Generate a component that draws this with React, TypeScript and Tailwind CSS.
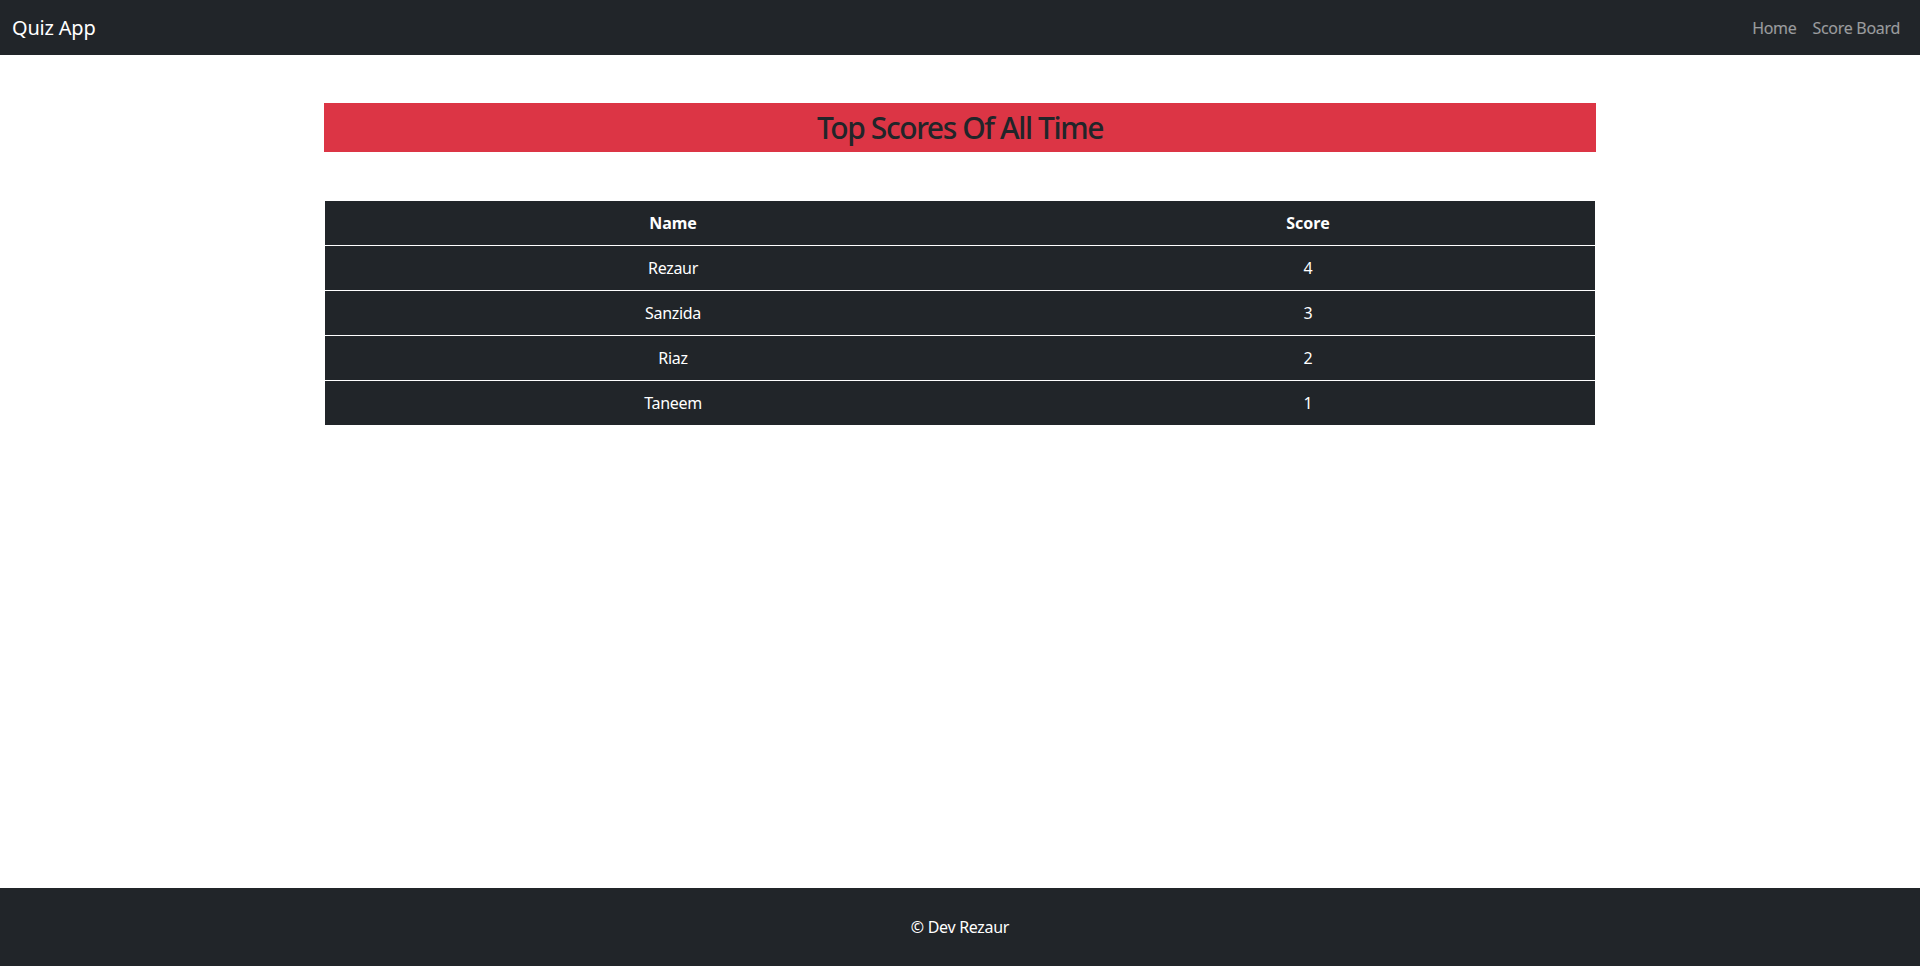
const scores = [
  { name: "Rezaur", score: 4 },
  { name: "Sanzida", score: 3 },
  { name: "Riaz", score: 2 },
  { name: "Taneem", score: 1 },
]

export default function App() {
  return (
    <div className="flex min-h-screen flex-col bg-white font-['Noto_Sans',sans-serif] text-[#212529]">
      {/* Navbar */}
      <nav className="flex h-[55px] items-center justify-between bg-[#212529] pl-3 pr-3">
        <span className="text-xl tracking-[-0.2px] text-white">Quiz App</span>
        <div className="flex items-center">
          <a className="px-2 text-base tracking-[-0.3px] text-white/55" href="#">
            Home
          </a>
          <a className="px-2 text-base tracking-[-0.3px] text-white/55" href="#">
            Score Board
          </a>
        </div>
      </nav>

      {/* Content */}
      <main className="flex-1">
        <div className="mx-auto mt-12 w-[1272px]">
          <div className="flex h-[49px] items-center justify-center bg-[#dc3545]">
            <h2 className="text-[30px] font-medium leading-tight tracking-[-1.4px]">
              Top Scores Of All Time
            </h2>
          </div>

          <table className="mx-auto mt-[49px] w-[1270px] border-collapse bg-[#212529] text-base text-white">
            <thead>
              <tr className="h-[44px]">
                <th className="w-[696px] font-bold">Name</th>
                <th className="font-bold">Score</th>
              </tr>
            </thead>
            <tbody>
              {scores.map((s) => (
                <tr key={s.name} className="h-[45px] border-t border-white">
                  <td className="text-center tracking-[-0.3px]">{s.name}</td>
                  <td className="text-center">{s.score}</td>
                </tr>
              ))}
            </tbody>
          </table>
        </div>
      </main>

      {/* Footer */}
      <footer className="flex h-[78px] items-center justify-center bg-[#212529]">
        <p className="text-base tracking-[-0.3px] text-white">© Dev Rezaur</p>
      </footer>
    </div>
  )
}
